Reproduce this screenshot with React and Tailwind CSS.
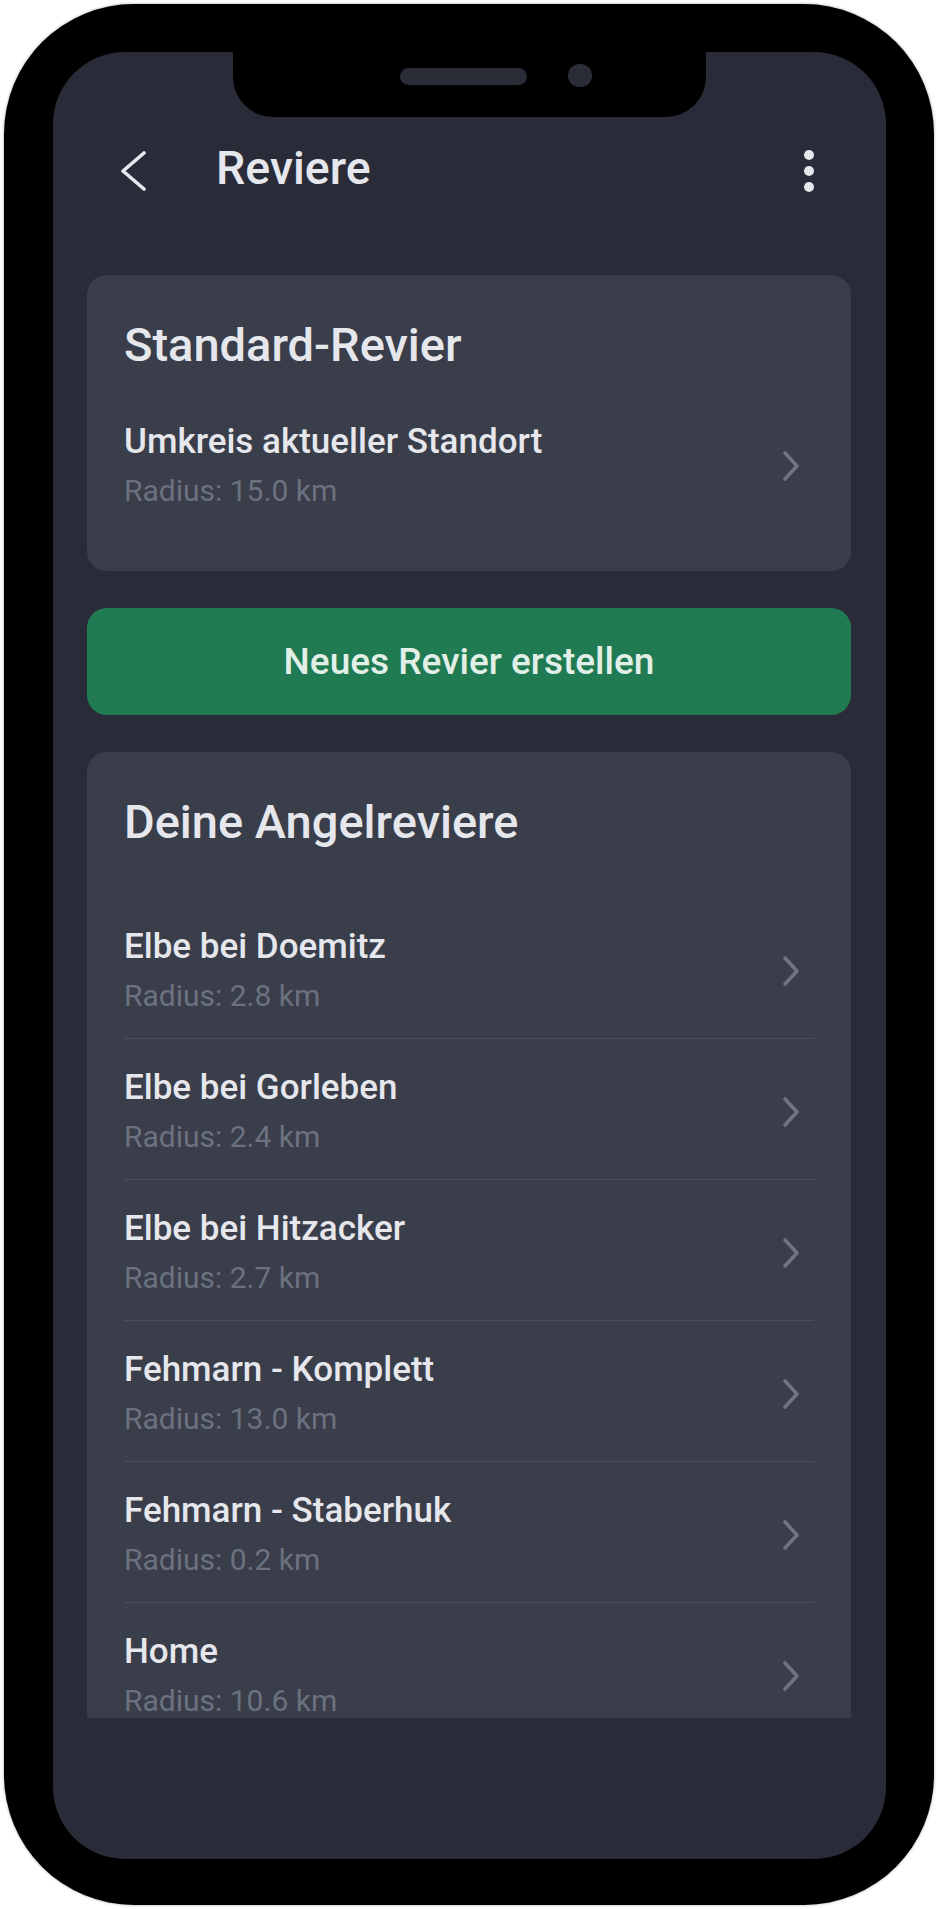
import React from 'react';

const reviere = [
  { name: 'Elbe bei Doemitz', radius: '2.8' },
  { name: 'Elbe bei Gorleben', radius: '2.4' },
  { name: 'Elbe bei Hitzacker', radius: '2.7' },
  { name: 'Fehmarn - Komplett', radius: '13.0' },
  { name: 'Fehmarn - Staberhuk', radius: '0.2' },
  { name: 'Home', radius: '10.6' },
];

function Chevron() {
  return (
    <svg width="18" height="32" viewBox="0 0 18 32" className="mr-[14px] shrink-0">
      <path d="M3 3 L15 16 L3 29" fill="none" stroke="#6e7481" strokeWidth="3.6" strokeLinecap="round" strokeLinejoin="round" />
    </svg>
  );
}

function Row({ name, radius, divider }) {
  return (
    <div className={`flex items-center justify-between pt-[29px] pb-[24px] ${divider ? 'border-b border-[#4a4f5c]' : ''}`}>
      <div className="flex flex-col gap-[11px]">
        <span className="text-[35px] leading-[40px] font-medium text-[#e6e7ec]">{name}</span>
        <span className="text-[30px] leading-[36px] text-[#6b717e]">Radius: {radius} km</span>
      </div>
      <Chevron />
    </div>
  );
}

export default function App() {
  return (
    <div className="w-[938px] h-[1909px] bg-white p-[4px]" style={{ fontFamily: 'Roboto, "Noto Sans", sans-serif' }}>
      <div className="w-[930px] h-[1901px] bg-black rounded-[130px] pt-[48px] pl-[49px] pr-[48px] pb-[46px] shadow-[0_0_3px_rgba(0,0,0,0.35)]">
        <div className="relative h-full rounded-[72px] bg-[#292c38] overflow-hidden flex flex-col">
          {/* notch */}
          <div className="absolute top-0 left-[180px] w-[473px] h-[65px] bg-black rounded-b-[40px]">
            <div className="absolute left-[167px] top-[16px] w-[127px] h-[17px] rounded-full bg-[#2a2d38]" />
            <div className="absolute left-[335px] top-[12px] w-[24px] h-[23px] rounded-full bg-[#2a2d38]" />
          </div>

          {/* toolbar */}
          <div className="mt-[79px] h-[80px] shrink-0 flex items-center pl-[67px] pr-[72px]">
            <svg width="26" height="40" viewBox="0 0 26 40" className="shrink-0">
              <path d="M24 2 L3 20 L24 38" fill="none" stroke="#e6e7ec" strokeWidth="3.6" strokeLinecap="round" strokeLinejoin="round" />
            </svg>
            <span className="ml-[70px] mb-[6px] text-[46.5px] leading-[56px] font-medium text-[#e6e7ec]">Reviere</span>
            <div className="ml-auto flex flex-col gap-[6px]">
              <span className="w-[10px] h-[10px] rounded-full bg-[#e6e7ec]" />
              <span className="w-[10px] h-[10px] rounded-full bg-[#e6e7ec]" />
              <span className="w-[10px] h-[10px] rounded-full bg-[#e6e7ec]" />
            </div>
          </div>

          {/* scroll area */}
          <div className="h-[1507px] shrink-0 overflow-hidden pl-[34px] pr-[35px] pt-[64px] flex flex-col gap-[37px]">
            <div className="bg-[#393e4a] rounded-[20px] px-[37px] pt-[42px] pb-[38px]">
              <h2 className="text-[47px] leading-[56px] font-medium text-[#e6e7ec] mb-[20px]">Standard-Revier</h2>
              <Row name="Umkreis aktueller Standort" radius="15.0" />
            </div>

            <button className="h-[107px] shrink-0 rounded-[20px] bg-[#207a52] text-[37px] font-medium text-[#e2efe7]">
              Neues Revier erstellen
            </button>

            <div className="bg-[#393e4a] rounded-[20px] px-[37px] pt-[42px] shrink-0">
              <h2 className="text-[47px] leading-[56px] font-medium text-[#e6e7ec] mb-[48px]">Deine Angelreviere</h2>
              {reviere.map((r) => (
                <Row key={r.name} name={r.name} radius={r.radius} divider />
              ))}
            </div>
          </div>
        </div>
      </div>
    </div>
  );
}
